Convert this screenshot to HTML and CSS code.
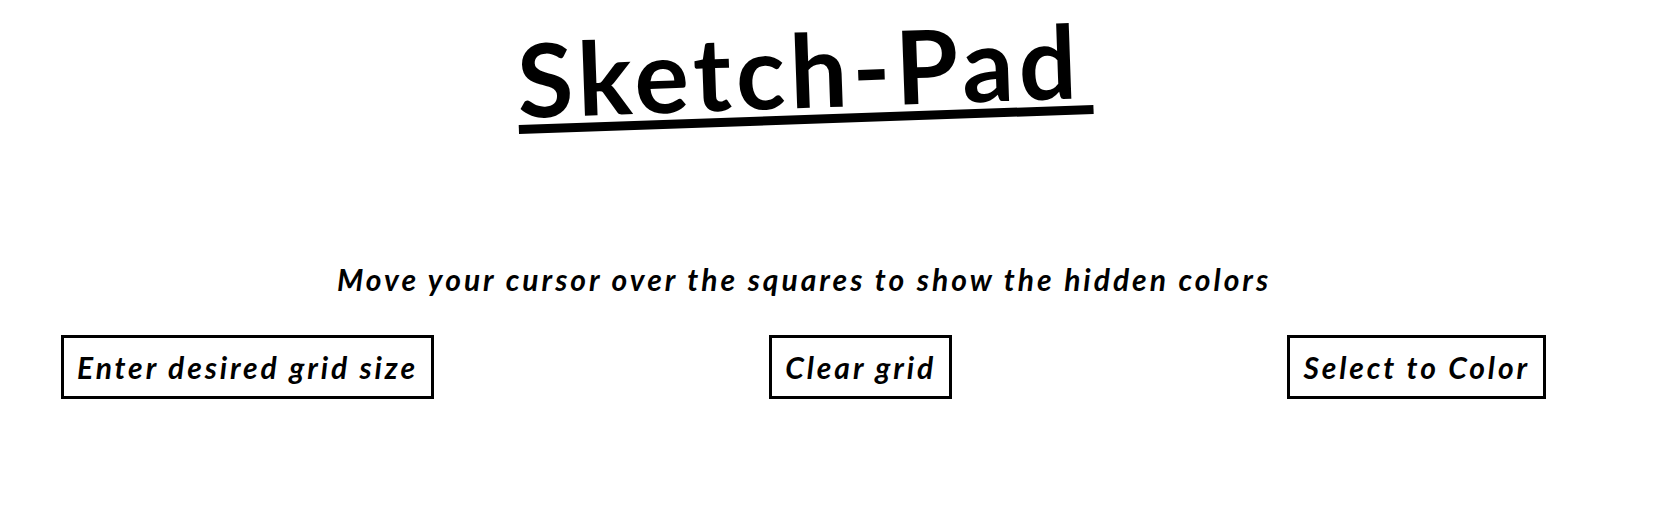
FILE: index.html
```html
<!DOCTYPE html>
<html lang="en">
<head>
<meta charset="utf-8">
<title>Sketch-Pad</title>
<link rel="stylesheet" href="styles.css">
</head>
<body>
<div class="page">
  <header class="header">
    <h1 class="title"><span class="title-text">Sketch-Pad</span></h1>
  </header>
  <p class="hint">Move your cursor over the squares to show the hidden colors</p>
  <div class="controls">
    <button class="btn">Enter desired grid size</button>
    <button class="btn">Clear grid</button>
    <button class="btn">Select to Color</button>
  </div>
</div>
</body>
</html>
```
FILE: styles.css
```css
html, body {
  background: #ffffff;
}
body {
  margin: 8px;
  font-family: "Lato", "Liberation Sans", sans-serif;
  color: #000;
}
.page {
  width: 1592px;
}
.header {
  display: flex;
  justify-content: center;
  padding-top: 10px;
}
.title {
  margin: 0;
  font-size: 102px;
  font-weight: 700;
  line-height: 1;
  letter-spacing: 5px;
  padding: 0 10px 0 0;
  border-bottom: 9px solid #000;
  transform: rotate(-2deg);
}
.title-text {
  display: block;
  margin-bottom: -5px;
}
.hint {
  margin: 137px 0 0;
  text-align: center;
  font-style: italic;
  font-weight: 700;
  font-size: 30px;
  letter-spacing: 3px;
  line-height: 36px;
}
.controls {
  display: flex;
  justify-content: space-between;
  padding: 0 54px 0 53px;
  margin-top: 38px;
}
.btn {
  font-family: inherit;
  font-style: italic;
  font-weight: 700;
  font-size: 30px;
  letter-spacing: 2.9px;
  color: #000;
  background: #fff;
  border: 3px solid #000;
  padding: 11px 13px;
  line-height: 36px;
  cursor: pointer;
}
```
